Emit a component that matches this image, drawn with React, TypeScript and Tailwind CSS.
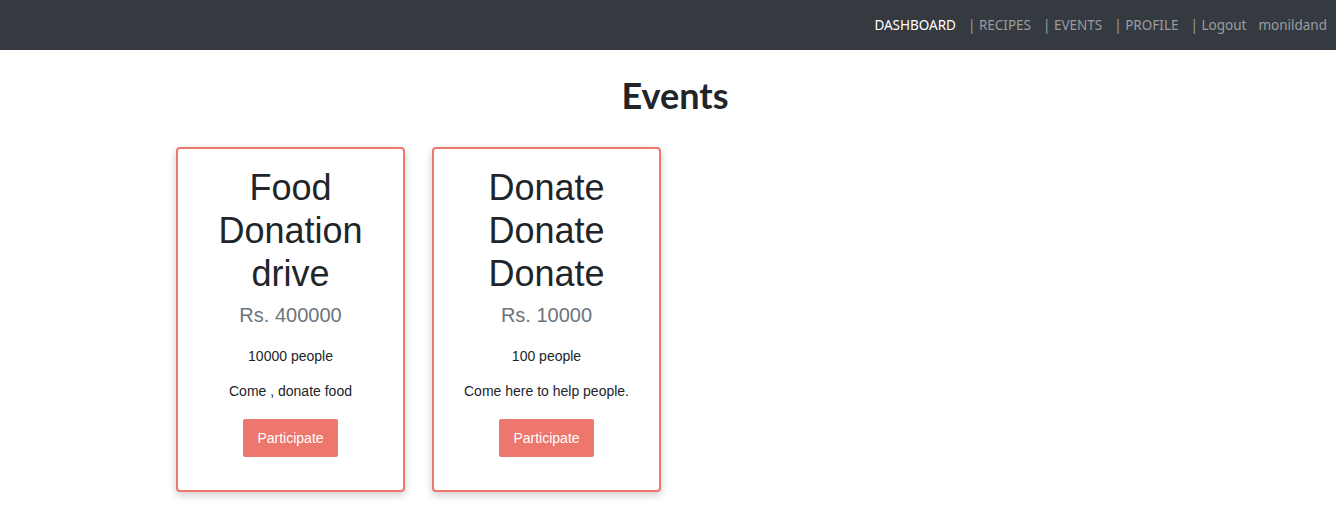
const events = [
  { title: "Food Donation drive", price: "Rs. 400000", people: "10000 people", desc: "Come , donate food" },
  { title: "Donate Donate Donate", price: "Rs. 10000", people: "100 people", desc: "Come here to help people." },
];

function Navbar() {
  const links = ["| RECIPES", "| EVENTS", "| PROFILE", "| Logout"];
  return (
    <nav className="h-[50px] bg-[#343a40] flex items-center justify-end pr-[9px] text-[13.5px]" style={{ fontFamily: '"Noto Sans", "Open Sans", sans-serif' }}>
      <div className="flex items-center gap-[12px]">
        <span className="text-white">DASHBOARD</span>
        {links.map((l) => (
          <span key={l} className="text-[#9a9da0]">{l}</span>
        ))}
        <span className="text-[#9a9da0]">monildand</span>
      </div>
    </nav>
  );
}

function EventCard({ e }: { e: (typeof events)[number] }) {
  return (
    <div className="w-[229px] h-[345px] border-2 border-[#ef766c] rounded-[4px] bg-white shadow-[0_3px_8px_rgba(0,0,0,0.2)] px-[20px] pt-[17px] text-center" style={{ fontFamily: '"Liberation Sans", Arial, sans-serif' }}>
      <h2 className="text-[36px] leading-[43px] text-[#212529] mb-[8px]">{e.title}</h2>
      <h5 className="text-[20px] leading-[24px] text-[#6c757d] mb-[19px]">{e.price}</h5>
      <p className="text-[14px] leading-[21px] text-[#212529] mb-[14px]">{e.people}</p>
      <p className="text-[14px] leading-[21px] text-[#212529] mb-[17px]">{e.desc}</p>
      <button className="bg-[#ee776d] text-white text-[14px] w-[95px] h-[38px] rounded-[2px]">Participate</button>
    </div>
  );
}

export default function App() {
  return (
    <div className="min-h-screen bg-white">
      <Navbar />
      <h1 className="text-center text-[36px] leading-[48px] font-bold text-[#212529] mt-[21px] pl-[14px]" style={{ fontFamily: 'Lato, "Open Sans", sans-serif' }}>
        Events
      </h1>
      <div className="w-[984px] mx-auto mt-[28px] flex gap-[27px]">
        {events.map((e) => (
          <EventCard key={e.title} e={e} />
        ))}
      </div>
    </div>
  );
}
